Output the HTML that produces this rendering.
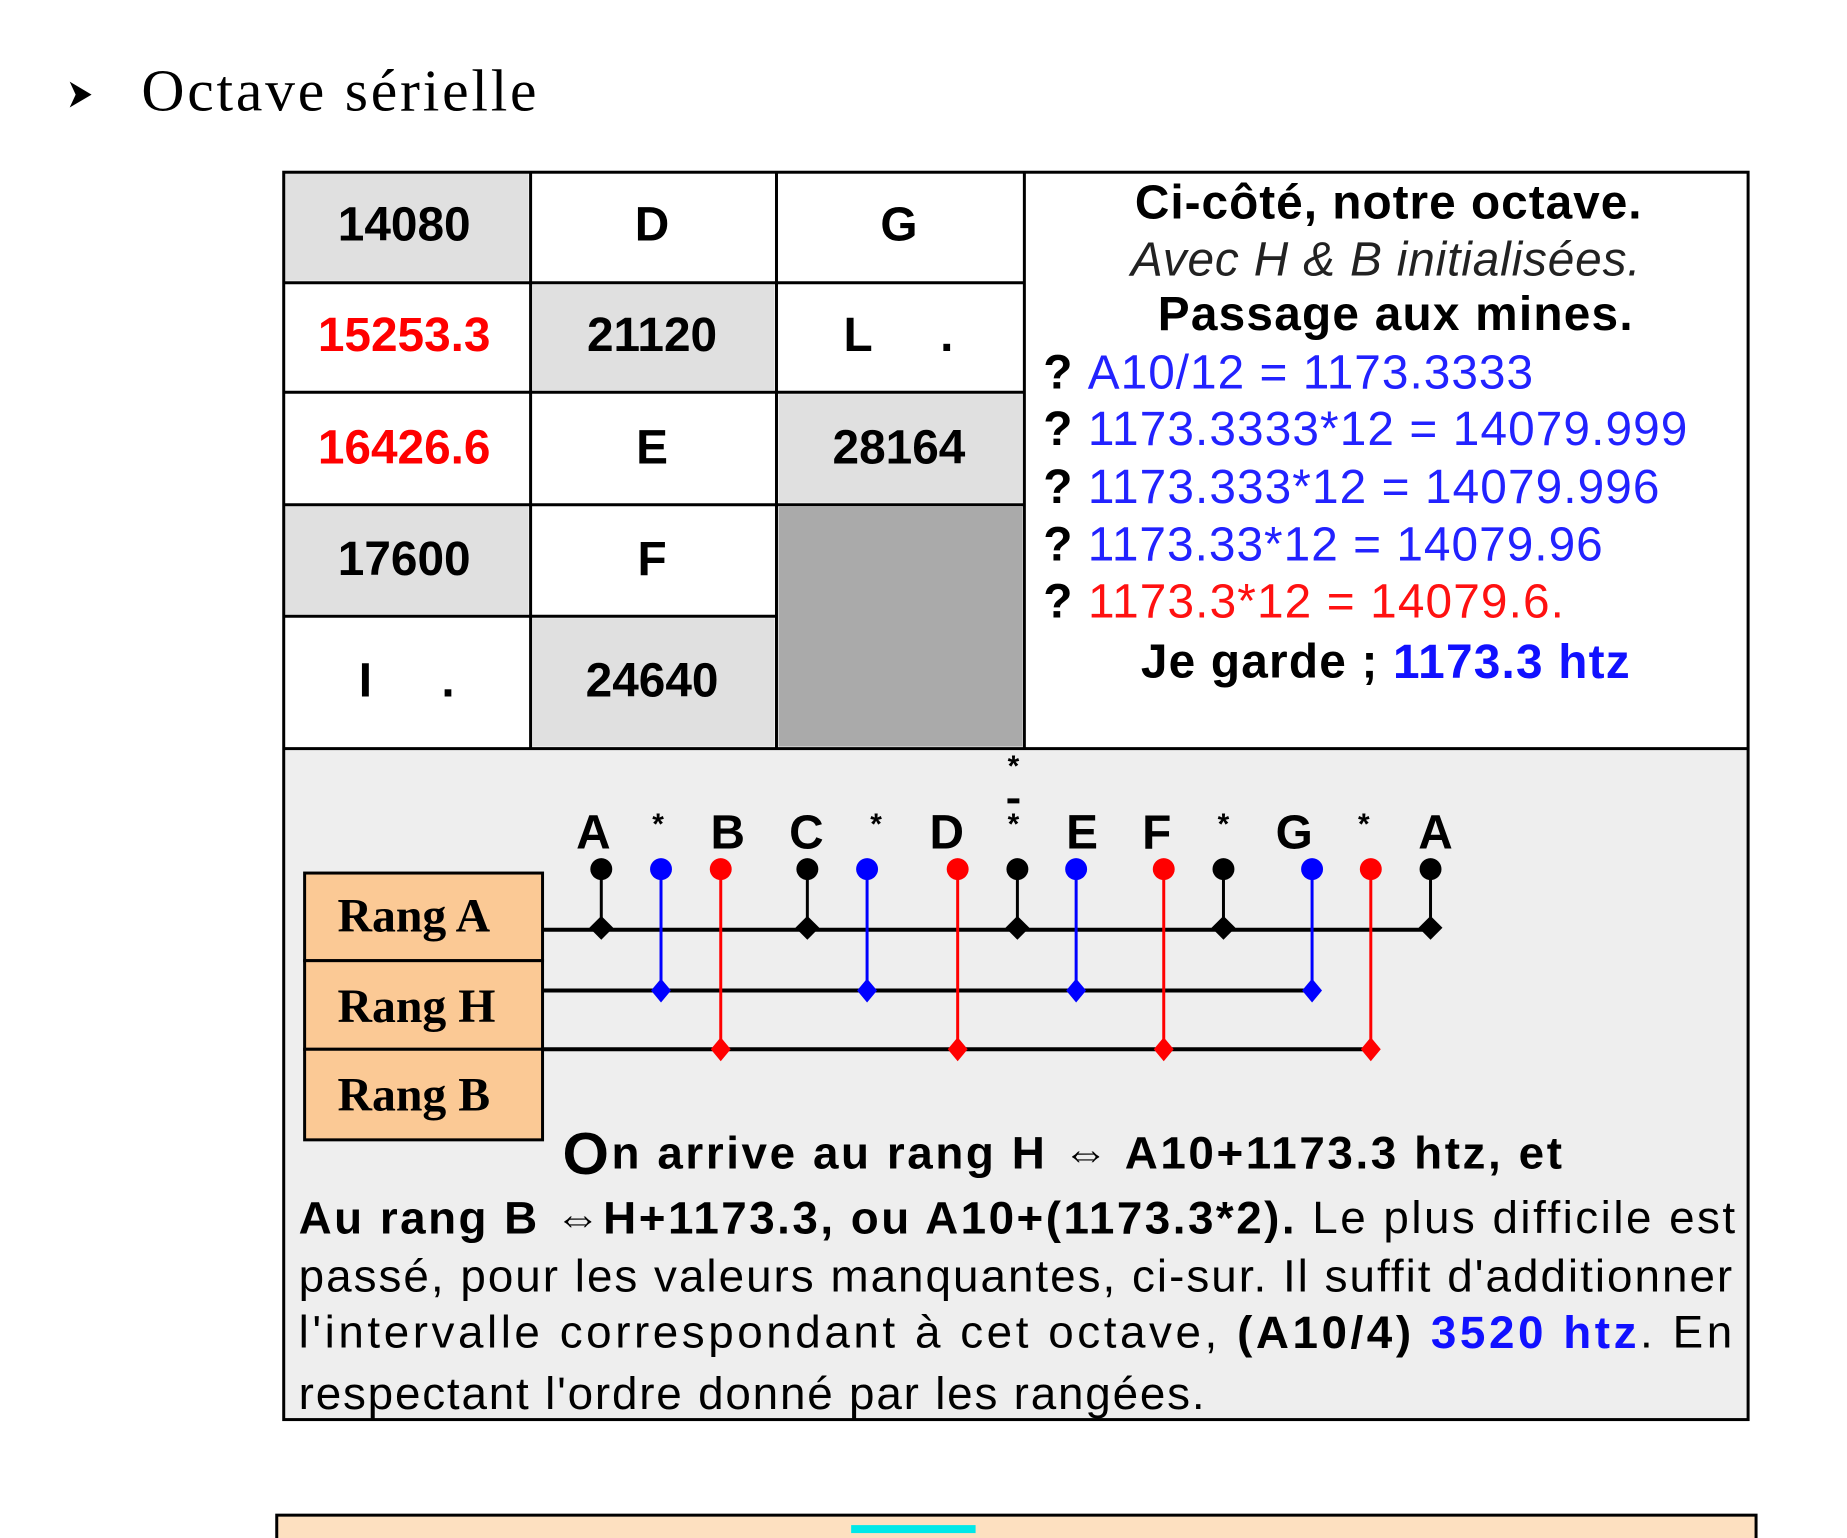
<!DOCTYPE html>
<html><head><meta charset="utf-8"><style>
html,body{margin:0;padding:0;background:#fff;}
svg{display:block;}
.s{font-family:"Liberation Sans",Arial,sans-serif;}
.r{font-family:"Liberation Serif","Times New Roman",serif;}
</style></head><body>
<svg width="1847" height="1538" viewBox="0 0 1847 1538" xmlns="http://www.w3.org/2000/svg">
<g transform="scale(0.9955)">
<!-- heading -->
<path d="M70 82 L92 95 L70 108 L76 95 Z" fill="#000"/>
<text class="r" x="142" y="91" font-size="60" dominant-baseline="central" textLength="397" lengthAdjust="spacing">Octave sérielle</text>

<!-- table cells -->
<rect x="284" y="172" width="1473" height="1255" fill="#fff"/>
<rect x="286" y="174" width="245" height="108" fill="#e0e0e0"/>
<rect x="535" y="286" width="243" height="106" fill="#e0e0e0"/>
<rect x="782" y="396" width="245" height="109" fill="#e0e0e0"/>
<rect x="286" y="509" width="245" height="108" fill="#e0e0e0"/>
<rect x="535" y="621" width="243" height="129" fill="#e0e0e0"/>
<rect x="782" y="509" width="245" height="241" fill="#aaaaaa"/>
<rect x="286" y="754" width="1469" height="671" fill="#eeeeee"/>
<g stroke="#000" stroke-width="3" fill="none">
<rect x="285" y="173" width="1471" height="1253"/>
<line x1="284" y1="752" x2="1757" y2="752"/>
<line x1="533" y1="172" x2="533" y2="752"/>
<line x1="780" y1="172" x2="780" y2="752"/>
<line x1="1029" y1="172" x2="1029" y2="752"/>
<line x1="284" y1="284" x2="1029" y2="284"/>
<line x1="284" y1="394" x2="1029" y2="394"/>
<line x1="284" y1="507" x2="1029" y2="507"/>
<line x1="284" y1="619" x2="780" y2="619"/>
</g>
<g class="s" font-size="48" font-weight="bold" text-anchor="middle" dominant-baseline="central">
<text x="406" y="226">14080</text><text x="655" y="226">D</text><text x="903" y="226">G</text>
<text x="406" y="337" fill="#ff0000">15253.3</text><text x="655" y="337">21120</text><text x="862" y="337">L</text><text x="951" y="337">.</text>
<text x="406" y="450" fill="#ff0000">16426.6</text><text x="655" y="450">E</text><text x="903" y="450">28164</text>
<text x="406" y="562">17600</text><text x="655" y="562">F</text>
<text x="367" y="684">I</text><text x="450" y="684">.</text><text x="655" y="684">24640</text>
</g>
<!-- right text -->
<g class="s" font-size="48" dominant-baseline="central">
<text x="1140" y="204" font-weight="bold" textLength="509" lengthAdjust="spacing">Ci-côté, notre octave.</text>
<text x="1136" y="261" font-style="italic" fill="#222" textLength="512" lengthAdjust="spacing">Avec H &amp; B initialisées.</text>
<text x="1163" y="316" font-weight="bold" textLength="477" lengthAdjust="spacing">Passage aux mines.</text>
<text x="1048" y="374" textLength="492" lengthAdjust="spacing"><tspan font-weight="bold">? </tspan><tspan fill="#2222ff">A10/12 = 1173.3333</tspan></text>
<text x="1048" y="431" textLength="647" lengthAdjust="spacing"><tspan font-weight="bold">? </tspan><tspan fill="#2222ff">1173.3333*12 = 14079.999</tspan></text>
<text x="1048" y="489" textLength="619" lengthAdjust="spacing"><tspan font-weight="bold">? </tspan><tspan fill="#2222ff">1173.333*12 = 14079.996</tspan></text>
<text x="1048" y="547" textLength="562" lengthAdjust="spacing"><tspan font-weight="bold">? </tspan><tspan fill="#2222ff">1173.33*12 = 14079.96</tspan></text>
<text x="1048" y="604" textLength="523" lengthAdjust="spacing"><tspan font-weight="bold">? </tspan><tspan fill="#ff1111">1173.3*12 = 14079.6.</tspan></text>
<text x="1146" y="665" font-weight="bold" textLength="491" lengthAdjust="spacing">Je garde ; <tspan fill="#1111ff">1173.3 htz</tspan></text>
</g>

<!-- diagram letters -->
<g class="s" font-size="48" font-weight="bold" text-anchor="middle" dominant-baseline="central">
<text x="596" y="837">A</text><text x="661" y="828" font-size="30">*</text><text x="731" y="837">B</text>
<text x="810" y="837">C</text><text x="880" y="828" font-size="30">*</text><text x="951" y="837">D</text>
<text x="1018" y="828" font-size="30">*</text><text x="1018" y="770" font-size="30">*</text>
<text x="1087" y="837">E</text><text x="1162" y="837">F</text><text x="1229" y="828" font-size="30">*</text>
<text x="1300" y="837">G</text><text x="1370" y="828" font-size="30">*</text><text x="1442" y="837">A</text>
</g>
<rect x="1012" y="802" width="12" height="5" fill="#000"/>

<!-- rang boxes -->
<g stroke="#000" stroke-width="3" fill="#fbc995">
<rect x="306" y="877" width="239" height="88"/>
<rect x="306" y="965" width="239" height="89"/>
<rect x="306" y="1054" width="239" height="91"/>
</g>
<g class="r" font-size="48" font-weight="bold" dominant-baseline="central">
<text x="339" y="920">Rang A</text>
<text x="339" y="1011">Rang H</text>
<text x="339" y="1100">Rang B</text>
</g>

<!-- horizontal lines -->
<g stroke="#000" stroke-width="4">
<line x1="545" y1="934" x2="1437" y2="934"/>
<line x1="545" y1="995" x2="1318" y2="995"/>
<line x1="545" y1="1054" x2="1377" y2="1054"/>
</g>
<!-- stems -->
<g stroke-width="3">
<line x1="604" y1="876" x2="604" y2="934" stroke="#000"/>
<line x1="664" y1="876" x2="664" y2="995" stroke="#0000ff"/>
<line x1="724" y1="876" x2="724" y2="1054" stroke="#ff0000"/>
<line x1="811" y1="876" x2="811" y2="934" stroke="#000"/>
<line x1="871" y1="876" x2="871" y2="995" stroke="#0000ff"/>
<line x1="962" y1="876" x2="962" y2="1054" stroke="#ff0000"/>
<line x1="1022" y1="876" x2="1022" y2="934" stroke="#000"/>
<line x1="1081" y1="876" x2="1081" y2="995" stroke="#0000ff"/>
<line x1="1169" y1="876" x2="1169" y2="1054" stroke="#ff0000"/>
<line x1="1229" y1="876" x2="1229" y2="934" stroke="#000"/>
<line x1="1318" y1="876" x2="1318" y2="995" stroke="#0000ff"/>
<line x1="1377" y1="876" x2="1377" y2="1054" stroke="#ff0000"/>
<line x1="1437" y1="876" x2="1437" y2="934" stroke="#000"/>
</g>
<g>
<circle cx="604" cy="873" r="11"/><path d="M604 920 L616 932 L604 944 L592 932Z"/>
<circle cx="664" cy="873" r="11" fill="#0000ff"/><path d="M664 983 L674 995 L664 1007 L654 995Z" fill="#0000ff"/>
<circle cx="724" cy="873" r="11" fill="#ff0000"/><path d="M724 1042 L734 1054 L724 1066 L714 1054Z" fill="#ff0000"/>
<circle cx="811" cy="873" r="11"/><path d="M811 920 L823 932 L811 944 L799 932Z"/>
<circle cx="871" cy="873" r="11" fill="#0000ff"/><path d="M871 983 L881 995 L871 1007 L861 995Z" fill="#0000ff"/>
<circle cx="962" cy="873" r="11" fill="#ff0000"/><path d="M962 1042 L972 1054 L962 1066 L952 1054Z" fill="#ff0000"/>
<circle cx="1022" cy="873" r="11"/><path d="M1022 920 L1034 932 L1022 944 L1010 932Z"/>
<circle cx="1081" cy="873" r="11" fill="#0000ff"/><path d="M1081 983 L1091 995 L1081 1007 L1071 995Z" fill="#0000ff"/>
<circle cx="1169" cy="873" r="11" fill="#ff0000"/><path d="M1169 1042 L1179 1054 L1169 1066 L1159 1054Z" fill="#ff0000"/>
<circle cx="1229" cy="873" r="11"/><path d="M1229 920 L1241 932 L1229 944 L1217 932Z"/>
<circle cx="1318" cy="873" r="11" fill="#0000ff"/><path d="M1318 983 L1328 995 L1318 1007 L1308 995Z" fill="#0000ff"/>
<circle cx="1377" cy="873" r="11" fill="#ff0000"/><path d="M1377 1042 L1387 1054 L1377 1066 L1367 1054Z" fill="#ff0000"/>
<circle cx="1437" cy="873" r="11"/><path d="M1437 920 L1449 932 L1437 944 L1425 932Z"/>
</g>

<!-- paragraph -->
<g class="s" font-size="46" dominant-baseline="central">
<text x="565" y="1158" font-weight="bold" textLength="1004" lengthAdjust="spacing"><tspan font-size="60">O</tspan>n arrive au rang H  ⇔ A10+1173.3 htz, et</text>
<text x="300" y="1223" textLength="1443" lengthAdjust="spacing"><tspan font-weight="bold">Au rang B ⇔H+1173.3, ou A10+(1173.3*2).</tspan> Le plus difficile est</text>
<text x="300" y="1282" textLength="1440" lengthAdjust="spacing">passé, pour les valeurs manquantes, ci-sur. Il suffit d'additionner</text>
<text x="300" y="1338" textLength="1440" lengthAdjust="spacing">l'intervalle correspondant à cet octave, <tspan font-weight="bold">(A10/4)</tspan> <tspan fill="#1111ff" font-weight="bold">3520 htz</tspan>. En</text>
<text x="300" y="1400" textLength="910" lengthAdjust="spacing">respectant l'ordre donné par les rangées.</text>
</g>

<!-- bottom box -->
<rect x="278" y="1522" width="1486" height="30" fill="#fde0c0" stroke="#000" stroke-width="3"/>
<rect x="855" y="1532" width="125" height="8" fill="#00e8e8"/>
</g>
</svg>
</body></html>
